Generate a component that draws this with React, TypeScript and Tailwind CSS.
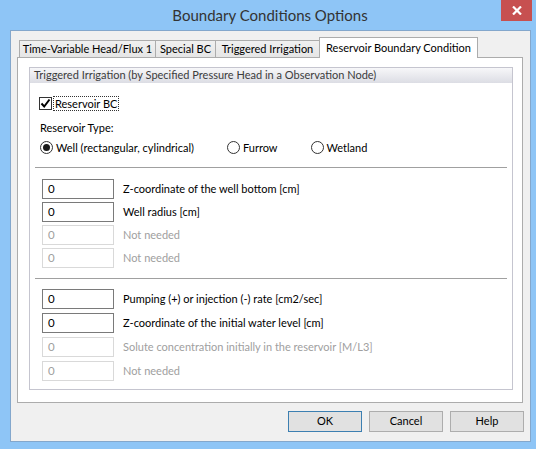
const font = { fontFamily: 'Lato, "Liberation Sans", sans-serif' };

interface FieldRowProps {
  value: string;
  label: string;
  disabled?: boolean;
}

const FieldRow = ({ value, label, disabled }: FieldRowProps) => {
  return (
    <div className="flex items-center">
      <div
        className={`w-[72px] h-[20px] border bg-white pl-[5px] flex items-center text-[11.5px] ${
          disabled ? "border-[#d9d9d9] text-[#a0a0a0]" : "border-[#7a7a7a] text-black"
        }`}
      >
        {value}
      </div>
      <span className={`ml-[9px] text-[11px] whitespace-nowrap ${disabled ? "text-[#a0a0a0]" : "text-black"}`}>{label}</span>
    </div>
  );
};

const Radio = ({ checked, label }: { checked?: boolean; label: string }) => (
  <div className="flex items-center">
    <div className="w-[13px] h-[13px] rounded-full border border-[#333] bg-white flex items-center justify-center">
      {checked && <div className="w-[7px] h-[7px] rounded-full bg-[#1a1a1a]" />}
    </div>
    <span className="ml-[3px] text-[11px] text-black whitespace-nowrap">{label}</span>
  </div>
);

const Tab = ({ label, active, width }: { label: string; active?: boolean; width: string }) =>
  active ? (
    <div className={`relative z-10 h-[21px] ${width} -ml-px bg-white border border-b-0 border-[#acacac] flex items-start justify-center pt-[2px] text-[11px] text-black whitespace-nowrap`}>
      {label}
    </div>
  ) : (
    <div className={`h-[18px] ${width} -ml-px first:ml-0 bg-gradient-to-b from-[#f0f0f0] to-[#e5e5e5] border border-b-0 border-[#acacac] flex items-center justify-center text-[11px] text-black whitespace-nowrap`}>
      {label}
    </div>
  );

const Button = ({ label, focused }: { label: string; focused?: boolean }) => (
  <div
    className={`w-[74px] h-[21px] flex items-center justify-center text-[11px] text-black bg-[#e1e1e1] border ${
      focused ? "border-[#3c7fb1]" : "border-[#adadad]"
    }`}
  >
    {label}
  </div>
);

export default function App() {
  return (
    <div className="w-[536px] h-[449px] bg-[#8ec5f6] flex flex-col overflow-hidden" style={font}>
      {/* Title bar */}
      <div className="h-[30px] flex shrink-0 relative">
        <div className="flex-1 flex items-center justify-center pl-[10px] pr-[6px] text-[15px] text-[#333]">
          Boundary Conditions Options
        </div>
        <div className="absolute right-[4px] top-0 w-[31px] h-[21px] bg-[#c75050] flex items-center justify-center">
          <svg width="10" height="9" viewBox="0 0 10 9">
            <path d="M1 0.5 L9 8.5 M9 0.5 L1 8.5" stroke="white" strokeWidth="2.2" />
          </svg>
        </div>
      </div>

      {/* Client area */}
      <div className="ml-[10px] mr-[5px] h-[412px] border border-[#83a7cc] bg-[#f0f0f0] pl-[6px] pr-[6px] pt-[6px] flex flex-col">
        {/* Tabs */}
        <div className="flex items-end h-[21px] pl-[2px] -mb-px">
          <Tab label="Time-Variable Head/Flux 1" width="w-[137px]" />
          <Tab label="Special BC" width="w-[61px]" />
          <Tab label="Triggered Irrigation" width="w-[105px]" />
          <Tab label="Reservoir Boundary Condition" width="w-[159px]" active />
        </div>

        {/* Tab panel */}
        <div className="h-[346px] mr-[1px] bg-white border border-[#acacac] pt-[9px] pl-[11px] pr-[9px]">
          <div className="h-[323px] border border-[#c5c5cf] flex flex-col">
            <div className="h-[15px] bg-gradient-to-b from-[#f7f7f9] to-[#dcdde4] flex items-center pl-[4px] text-[11px] text-[#3c3c3c] whitespace-nowrap">
              Triggered Irrigation (by Specified Pressure Head in a Observation Node)
            </div>

            <div className="flex items-center ml-[9px] mt-[13px]">
              <div className="w-[13px] h-[13px] border border-[#333] bg-white flex items-center justify-center">
                <svg width="11" height="11" viewBox="0 0 11 11">
                  <path d="M1.5 5.5 L4.2 8.5 L9.5 1.5" stroke="black" strokeWidth="2" fill="none" />
                </svg>
              </div>
              <span className="ml-[1px] px-[1px] text-[11px] text-black border border-dotted border-[#333] leading-[13px]">
                Reservoir BC
              </span>
            </div>

            <div className="ml-[10px] mt-[9px] text-[11px] text-black">Reservoir Type:</div>

            <div className="flex items-center ml-[10px] mt-[3px]">
              <Radio checked label="Well (rectangular, cylindrical)" />
              <div className="ml-[33px]">
                <Radio label="Furrow" />
              </div>
              <div className="ml-[33px]">
                <Radio label="Wetland" />
              </div>
            </div>

            <div className="mx-[5px] mt-[11px] h-px bg-[#a0a0a0]" />

            <div className="ml-[12px] mt-[11px] flex flex-col gap-[3px]">
              <FieldRow value="0" label="Z-coordinate of the well bottom [cm]" />
              <FieldRow value="0" label="Well radius [cm]" />
              <FieldRow value="0" label="Not needed" disabled />
              <FieldRow value="0" label="Not needed" disabled />
            </div>

            <div className="mx-[5px] mt-[10px] h-px bg-[#a0a0a0]" />

            <div className="ml-[12px] mt-[10px] flex flex-col gap-[4px]">
              <FieldRow value="0" label="Pumping (+) or injection (-) rate [cm2/sec]" />
              <FieldRow value="0" label="Z-coordinate of the initial water level [cm]" />
              <FieldRow value="0" label="Solute concentration initially in the reservoir [M/L3]" disabled />
              <FieldRow value="0" label="Not needed" disabled />
            </div>
          </div>
        </div>

        {/* Buttons */}
        <div className="flex justify-end gap-[7px] mt-[8px]">
          <Button label="OK" focused />
          <Button label="Cancel" />
          <Button label="Help" />
        </div>
      </div>
    </div>
  );
}
